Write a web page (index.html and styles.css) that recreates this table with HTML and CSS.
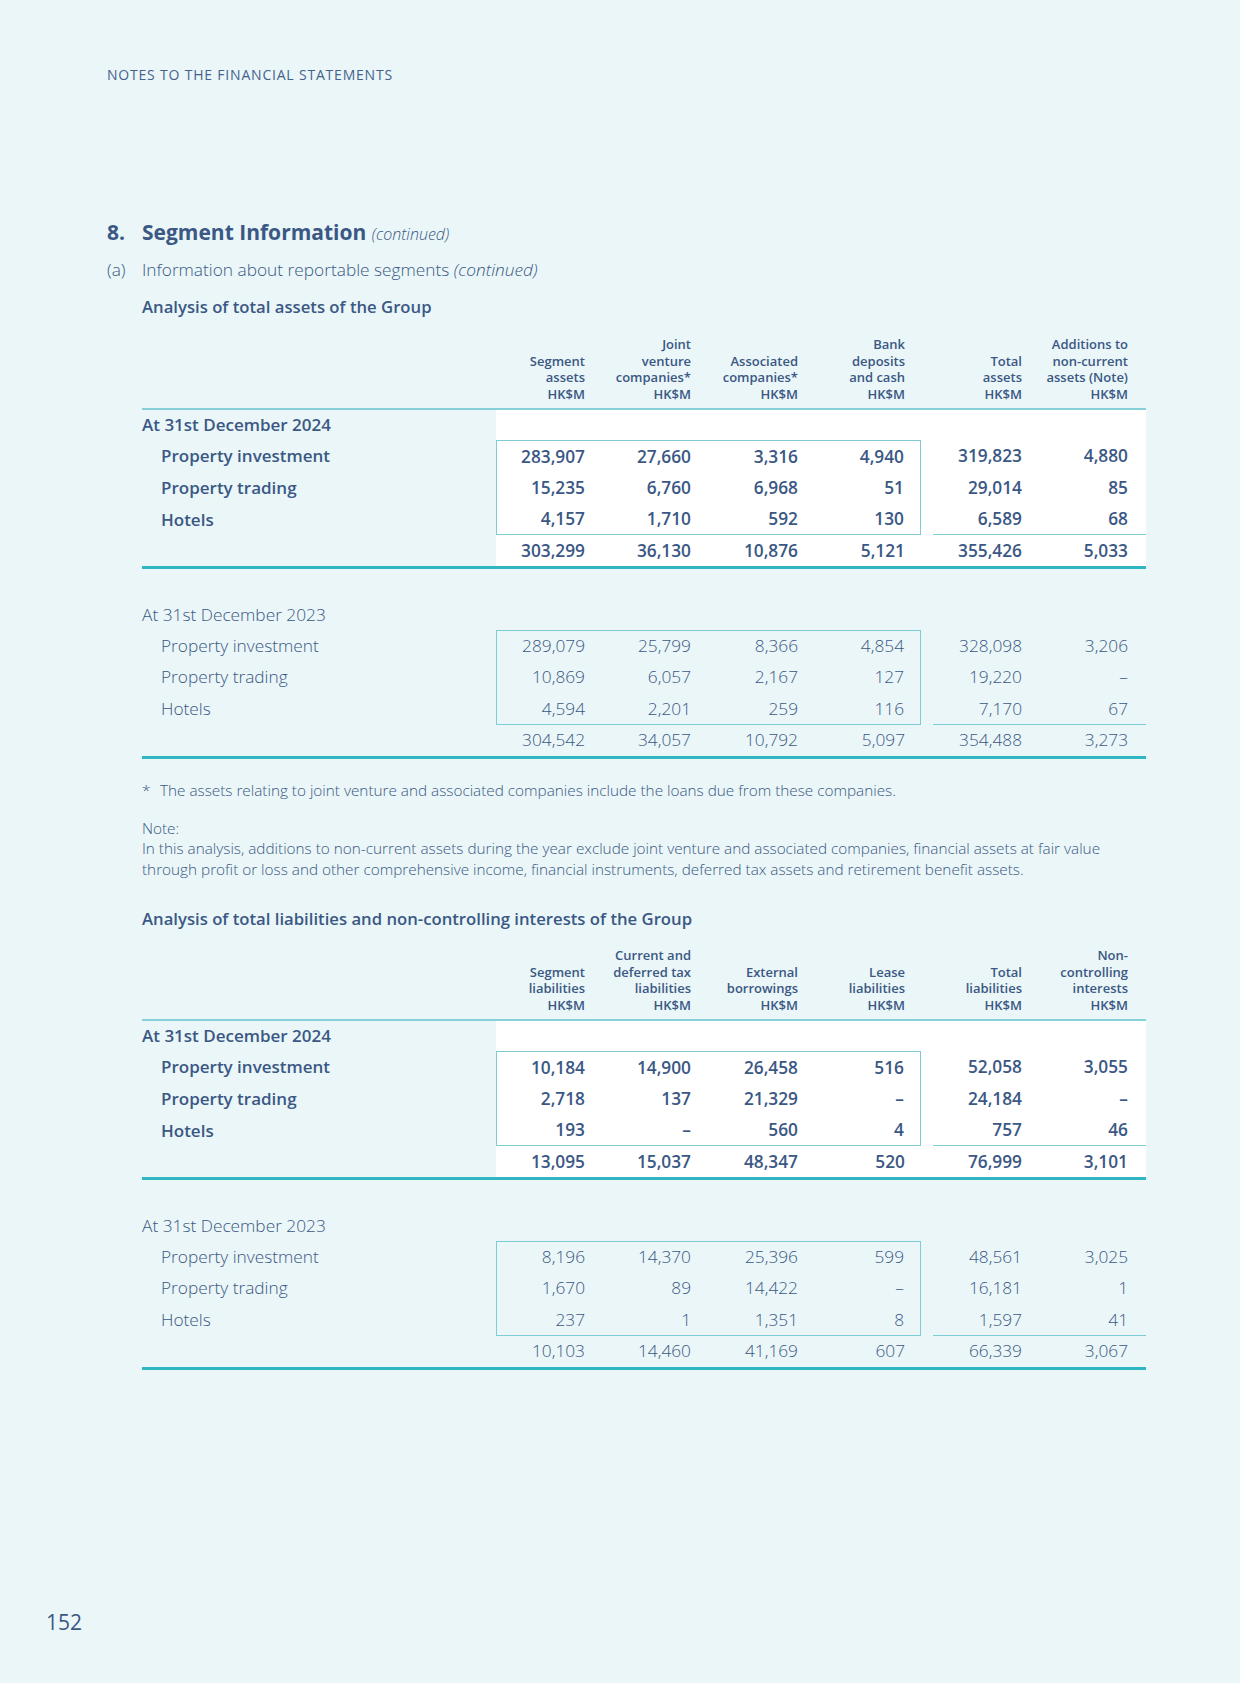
FILE: index.html
```html
<!DOCTYPE html>
<html lang="en">
<head>
<meta charset="utf-8">
<title>Notes to the Financial Statements – Segment Information</title>
<link rel="stylesheet" href="styles.css">
</head>
<body>
<div class="page">
  <header class="running-head">NOTES TO THE FINANCIAL STATEMENTS</header>

  <section class="note">
    <h1 class="note-title"><span class="idx">8.</span><span class="ttl">Segment Information <em>(continued)</em></span></h1>
    <p class="subhead"><span class="idx">(a)</span><span>Information about reportable segments <em>(continued)</em></span></p>

    <div class="body">
      <h2 class="analysis-title">Analysis of total assets of the Group</h2>
      <table class="seg">
        <colgroup>
          <col class="c-label"><col class="c1"><col class="c2"><col class="c3"><col class="c4"><col class="c-gap"><col class="c5"><col class="c6">
        </colgroup>
        <thead>
          <tr>
            <th class="lab"></th>
            <th>Segment<br>assets<br>HK$M</th>
            <th>Joint<br>venture<br>companies*<br>HK$M</th>
            <th>Associated<br>companies*<br>HK$M</th>
            <th class="b4">Bank<br>deposits<br>and cash<br>HK$M</th>
            <th class="gap"></th>
            <th>Total<br>assets<br>HK$M</th>
            <th class="r6">Additions to<br>non-current<br>assets (Note)<br>HK$M</th>
          </tr>
        </thead>
        <tbody class="cur">
          <tr class="period"><th class="lab">At 31st December 2024</th><td class="fill" colspan="7"></td></tr>
          <tr class="r first"><th class="lab">Property investment</th><td class="b1">283,907</td><td>27,660</td><td>3,316</td><td class="b4">4,940</td><td class="gap"></td><td class="r5">319,823</td><td class="r6">4,880</td></tr>
          <tr class="r"><th class="lab">Property trading</th><td class="b1">15,235</td><td>6,760</td><td>6,968</td><td class="b4">51</td><td class="gap"></td><td class="r5">29,014</td><td class="r6">85</td></tr>
          <tr class="r last"><th class="lab">Hotels</th><td class="b1">4,157</td><td>1,710</td><td>592</td><td class="b4">130</td><td class="gap"></td><td class="r5">6,589</td><td class="r6">68</td></tr>
          <tr class="total"><th class="lab"></th><td>303,299</td><td>36,130</td><td>10,876</td><td class="b4">5,121</td><td class="gap"></td><td>355,426</td><td class="r6">5,033</td></tr>
        </tbody>
        <tbody class="prev">
          <tr class="period"><th class="lab">At 31st December 2023</th><td colspan="7"></td></tr>
          <tr class="r first"><th class="lab">Property investment</th><td class="b1">289,079</td><td>25,799</td><td>8,366</td><td class="b4">4,854</td><td class="gap"></td><td class="r5">328,098</td><td class="r6">3,206</td></tr>
          <tr class="r"><th class="lab">Property trading</th><td class="b1">10,869</td><td>6,057</td><td>2,167</td><td class="b4">127</td><td class="gap"></td><td class="r5">19,220</td><td class="r6">–</td></tr>
          <tr class="r last"><th class="lab">Hotels</th><td class="b1">4,594</td><td>2,201</td><td>259</td><td class="b4">116</td><td class="gap"></td><td class="r5">7,170</td><td class="r6">67</td></tr>
          <tr class="total"><th class="lab"></th><td>304,542</td><td>34,057</td><td>10,792</td><td class="b4">5,097</td><td class="gap"></td><td>354,488</td><td class="r6">3,273</td></tr>
        </tbody>
      </table>

      <p class="footnote"><span class="star">*</span><span>The assets relating to joint venture and associated companies include the loans due from these companies.</span></p>

      <div class="note-text">
        <p>Note:</p>
        <p>In this analysis, additions to non-current assets during the year exclude joint venture and associated companies, financial assets at fair value through profit or loss and other comprehensive income, financial instruments, deferred tax assets and retirement benefit assets.</p>
      </div>

      <h2 class="analysis-title second">Analysis of total liabilities and non-controlling interests of the Group</h2>
      <table class="seg">
        <colgroup>
          <col class="c-label"><col class="c1"><col class="c2"><col class="c3"><col class="c4"><col class="c-gap"><col class="c5"><col class="c6">
        </colgroup>
        <thead>
          <tr>
            <th class="lab"></th>
            <th>Segment<br>liabilities<br>HK$M</th>
            <th>Current and<br>deferred tax<br>liabilities<br>HK$M</th>
            <th>External<br>borrowings<br>HK$M</th>
            <th class="b4">Lease<br>liabilities<br>HK$M</th>
            <th class="gap"></th>
            <th>Total<br>liabilities<br>HK$M</th>
            <th class="r6">Non-<br>controlling<br>interests<br>HK$M</th>
          </tr>
        </thead>
        <tbody class="cur">
          <tr class="period"><th class="lab">At 31st December 2024</th><td class="fill" colspan="7"></td></tr>
          <tr class="r first"><th class="lab">Property investment</th><td class="b1">10,184</td><td>14,900</td><td>26,458</td><td class="b4">516</td><td class="gap"></td><td class="r5">52,058</td><td class="r6">3,055</td></tr>
          <tr class="r"><th class="lab">Property trading</th><td class="b1">2,718</td><td>137</td><td>21,329</td><td class="b4">–</td><td class="gap"></td><td class="r5">24,184</td><td class="r6">–</td></tr>
          <tr class="r last"><th class="lab">Hotels</th><td class="b1">193</td><td>–</td><td>560</td><td class="b4">4</td><td class="gap"></td><td class="r5">757</td><td class="r6">46</td></tr>
          <tr class="total"><th class="lab"></th><td>13,095</td><td>15,037</td><td>48,347</td><td class="b4">520</td><td class="gap"></td><td>76,999</td><td class="r6">3,101</td></tr>
        </tbody>
        <tbody class="prev">
          <tr class="period"><th class="lab">At 31st December 2023</th><td colspan="7"></td></tr>
          <tr class="r first"><th class="lab">Property investment</th><td class="b1">8,196</td><td>14,370</td><td>25,396</td><td class="b4">599</td><td class="gap"></td><td class="r5">48,561</td><td class="r6">3,025</td></tr>
          <tr class="r"><th class="lab">Property trading</th><td class="b1">1,670</td><td>89</td><td>14,422</td><td class="b4">–</td><td class="gap"></td><td class="r5">16,181</td><td class="r6">1</td></tr>
          <tr class="r last"><th class="lab">Hotels</th><td class="b1">237</td><td>1</td><td>1,351</td><td class="b4">8</td><td class="gap"></td><td class="r5">1,597</td><td class="r6">41</td></tr>
          <tr class="total"><th class="lab"></th><td>10,103</td><td>14,460</td><td>41,169</td><td class="b4">607</td><td class="gap"></td><td>66,339</td><td class="r6">3,067</td></tr>
        </tbody>
      </table>
    </div>
  </section>

  <footer class="folio">152</footer>
</div>
</body>
</html>
```

FILE: styles.css
```css
html, body {
  margin: 0;
  padding: 0;
  background: #eaf6f7;
}

body {
  font-family: "Open Sans", "Noto Sans", sans-serif;
  color: #3b5885;
}

.page {
  width: 1240px;
  min-height: 1683px;
  padding: 66px 0 47px;
  box-sizing: border-box;
  display: flex;
  flex-direction: column;
}

.running-head {
  margin-left: 107px;
  font-size: 14px;
  line-height: 18px;
  letter-spacing: 0.8px;
  color: #45628d;
}

.note {
  margin-left: 107px;
}

.note-title {
  display: flex;
  margin: 133px 0 0;
  font-size: 21px;
  line-height: 30px;
  font-weight: 700;
}

.note-title .idx {
  width: 35px;
  flex: none;
}

.note-title em {
  font-size: 16px;
  font-weight: 300;
  font-style: italic;
}

.subhead {
  display: flex;
  margin: 10px 0 0;
  font-size: 17.3px;
  line-height: 22px;
  font-weight: 300;
}

.subhead .idx {
  width: 35px;
  flex: none;
}

.subhead em {
  font-style: italic;
}

.body {
  margin-left: 35px;
}

.analysis-title {
  margin: 15px 0 0;
  font-size: 16.7px;
  line-height: 22px;
  font-weight: 600;
}

.analysis-title.second {
  margin-top: 29px;
}

/* ---------- segment tables ---------- */
.seg {
  margin-top: 18px;
  width: 1004px;
  table-layout: fixed;
  border-collapse: separate;
  border-spacing: 0;
}

.analysis-title.second + .seg {
  margin-top: 17px;
}

.seg col.c-label { width: 354px; }
.seg col.c1 { width: 96px; }
.seg col.c2 { width: 106px; }
.seg col.c3 { width: 107px; }
.seg col.c4 { width: 116px; }
.seg col.c-gap { width: 12px; }
.seg col.c5 { width: 96px; }
.seg col.c6 { width: 117px; }

.seg th,
.seg td {
  padding: 0 7px 0 0;
  font-size: 17.3px;
  line-height: 22px;
  font-weight: 600;
  text-align: right;
  vertical-align: middle;
  white-space: nowrap;
}

.seg th.lab {
  text-align: left;
  padding: 0;
  font-size: 17px;
}

.seg tr.r th.lab {
  padding-left: 19px;
}

.seg .gap {
  padding: 0;
}

.seg .b4 {
  padding-right: 16px;
}

.seg .r6 {
  padding-right: 18px;
}

/* header */
.seg thead th {
  font-size: 13px;
  line-height: 16.6px;
  font-weight: 600;
  vertical-align: bottom;
  padding-bottom: 6px;
  border-bottom: 2px solid #86d2d8;
}

/* rows */
.seg tr.period { height: 30px; }
.seg tr.r { height: 31.7px; }
.seg tr.total { height: 33.5px; }

.seg tr.total th,
.seg tr.total td {
  border-bottom: 3px solid #2fb6c2;
}

.seg tbody.cur td {
  background: #ffffff;
}

.seg tbody.prev th,
.seg tbody.prev td {
  font-weight: 300;
}

.seg tbody.prev th.lab {
  font-size: 17.3px;
}

.seg tbody.prev tr.period {
  height: 61px;
}

.seg tbody.prev tr.period th,
.seg tbody.prev tr.period td {
  vertical-align: bottom;
  padding-bottom: 4px;
}

/* bordered box around the first four value columns */
.seg tr.first td.b1,
.seg tr.first td.b1 ~ td:not(.gap):not(.r5):not(.r6) {
  border-top: 1px solid #7fcdd4;
}

.seg tr.r td.b1 {
  border-left: 1px solid #7fcdd4;
}

.seg tr.r td.b4 {
  border-right: 1px solid #7fcdd4;
}

.seg tr.last td:not(.gap) {
  border-bottom: 1px solid #7fcdd4;
}

/* ---------- notes ---------- */
.footnote {
  display: flex;
  margin: 21px 0 0;
  font-size: 15.3px;
  line-height: 20px;
  font-weight: 300;
}

.footnote .star {
  width: 18px;
  flex: none;
}

.note-text {
  margin-top: 18px;
  font-size: 15.3px;
  line-height: 20.5px;
  font-weight: 300;
}

.note-text p {
  margin: 0;
  max-width: 975px;
}

.folio {
  margin: auto 0 0 46px;
  font-size: 21px;
  line-height: 28px;
  font-weight: 400;
  color: #3b5885;
}
```
